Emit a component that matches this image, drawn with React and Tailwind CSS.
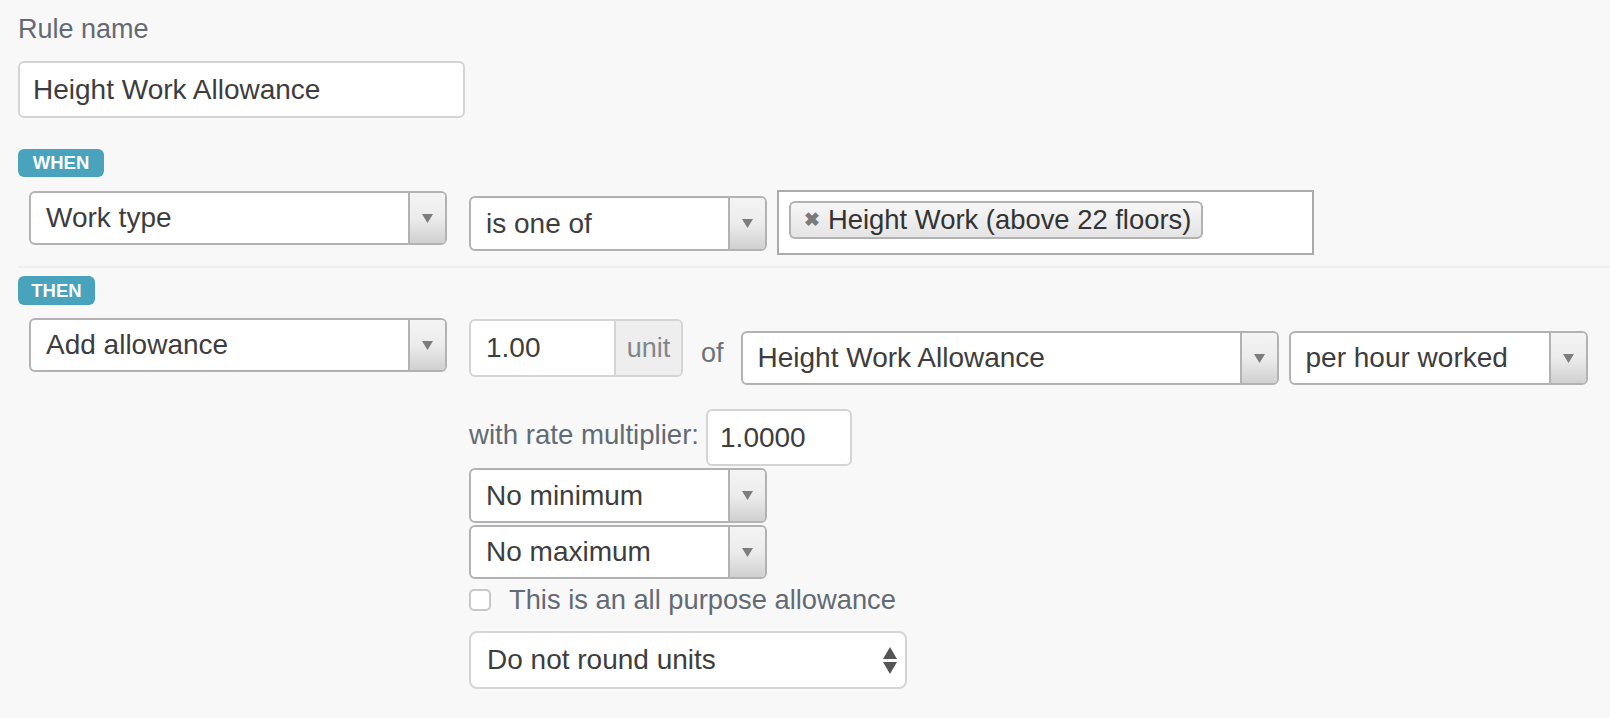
import { useState } from "react";

function Arrow() {
  return (
    <svg width="11" height="9" viewBox="0 0 11 9">
      <polygon points="0,0 11,0 5.5,9" fill="#7d7d7d" />
    </svg>
  );
}

function Select({ label, className }) {
  return (
    <div className={`flex bg-white border-2 border-[#b2b2b2] rounded-[6px] overflow-hidden ${className}`}>
      <span className="flex-1 flex items-center pl-[15px] text-[28px] text-[#3d3d3d] whitespace-nowrap">
        {label}
      </span>
      <span className="w-[37px] border-l-2 border-[#b2b2b2] bg-linear-to-b from-[#f4f4f4] via-[#ececec] to-[#d0d0d0] flex items-center justify-center">
        <Arrow />
      </span>
    </div>
  );
}

function Badge({ children, className }) {
  return (
    <span className={`inline-flex items-center justify-center rounded-[6px] bg-[#4aa3bd] text-[#f7fbfc] text-[18.5px] font-bold ${className}`}>
      {children}
    </span>
  );
}

export default function App() {
  const [allPurpose, setAllPurpose] = useState(false);

  return (
    <div className="min-h-screen bg-[#f8f8f8] font-['Liberation_Sans',Arial,sans-serif]">
      <div className="pl-[18px] pt-[14px] pb-[10px]">
        {/* Rule name */}
        <label className="block text-[27px] leading-[30px] text-[#626a73]">Rule name</label>
        <div className="mt-[17px] w-[447px] h-[57px] flex items-center bg-white border-2 border-[#d4d4d4] rounded-[6px] pl-[13px] text-[28px] text-[#3d3d3d]">
          Height Work Allowance
        </div>

        {/* WHEN */}
        <Badge className="mt-[31px] w-[86px] h-[28px]">WHEN</Badge>
        <div className="mt-[13px] pl-[11px] flex items-start">
          <Select label="Work type" className="mt-[1px] w-[418px] h-[54px]" />
          <Select label="is one of" className="ml-[22px] mt-[6px] w-[298px] h-[55px]" />
          <div className="ml-[10px] w-[537px] h-[65px] bg-white border-2 border-[#ababab] pl-[10px] pt-[9px]">
            <span className="inline-flex items-center h-[38px] pl-[13px] pr-[10px] rounded-[6px] border-2 border-[#b2b2b2] bg-linear-to-b from-[#f7f7f7] to-[#e4e4e4] text-[27.4px] text-[#333]">
              <span className="text-[#7a7a7a] text-[19px] mr-[8px] font-bold">✖</span>
              Height Work (above 22 floors)
            </span>
          </div>
        </div>

        <div className="mt-[11px] border-t-2 border-[#eeeeee]" />

        {/* THEN */}
        <Badge className="mt-[8px] w-[77px] h-[29px]">THEN</Badge>
        <div className="mt-[13px] pl-[11px] flex items-start">
          <Select label="Add allowance" className="w-[418px] h-[54px]" />
          <div className="ml-[22px] flex flex-col">
            <div className="flex items-start">
              <div className="mt-[1px] flex h-[58px] w-[214px] bg-white border-2 border-[#d4d4d4] rounded-[6px] overflow-hidden">
                <span className="flex-1 flex items-center pl-[15px] text-[28px] text-[#3d3d3d]">1.00</span>
                <span className="w-[67px] flex items-center justify-center border-l-2 border-[#d4d4d4] bg-[#eeeeee] text-[27px] text-[#80868c]">
                  unit
                </span>
              </div>
              <span className="ml-[18px] mt-[20px] text-[27px] leading-[30px] text-[#6b7279]">of</span>
              <Select label="Height Work Allowance" className="ml-[17px] mt-[13px] w-[538px] h-[54px]" />
              <Select label="per hour worked" className="ml-[10px] mt-[13px] w-[299px] h-[54px]" />
            </div>

            <div className="mt-[24px] flex items-start">
              <span className="mt-[11px] text-[27.6px] leading-[30px] text-[#626a73]">with rate multiplier:</span>
              <div className="ml-[7px] w-[146px] h-[57px] flex items-center bg-white border-2 border-[#d4d4d4] rounded-[6px] pl-[12px] text-[28px] text-[#3d3d3d]">
                1.0000
              </div>
            </div>

            <Select label="No minimum" className="mt-[2px] w-[298px] h-[55px]" />
            <Select label="No maximum" className="mt-[2px] w-[298px] h-[54px]" />

            <label className="mt-[10px] flex items-center cursor-pointer">
              <input
                type="checkbox"
                checked={allPurpose}
                onChange={(e) => setAllPurpose(e.target.checked)}
                className="appearance-none w-[22px] h-[22px] bg-white border-2 border-[#c8c8c8] rounded-[5px]"
              />
              <span className="ml-[18px] text-[27.3px] leading-[22px] text-[#626a73]">This is an all purpose allowance</span>
            </label>

            <div className="mt-[20px] w-[438px] h-[58px] flex items-center bg-white border-2 border-[#d4d4d4] rounded-[8px] pl-[16px] pr-[8px] text-[28px] text-[#3d3d3d]">
              <span className="flex-1">Do not round units</span>
              <svg width="14" height="27" viewBox="0 0 14 27">
                <polygon points="7,0 14,12 0,12" fill="#555" />
                <polygon points="0,15 14,15 7,27" fill="#555" />
              </svg>
            </div>
          </div>
        </div>
      </div>
    </div>
  );
}
